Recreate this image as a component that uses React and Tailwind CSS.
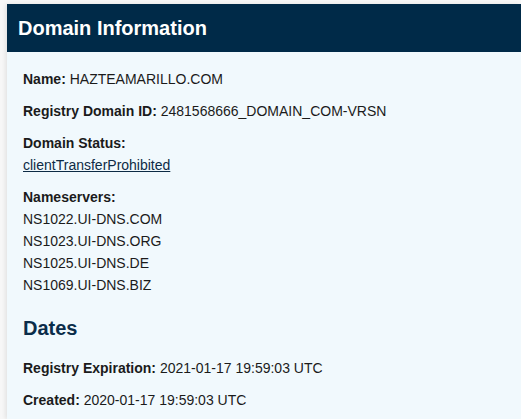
export default function App() {
  return (
    <div className="min-h-[419px] bg-[#f7f7f7] pt-[4px] pl-[7px] overflow-hidden" style={{ fontFamily: '"Liberation Sans", Arial, sans-serif' }}>
      <div className="bg-[#f1f9fd] shadow-[-2px_0_4px_rgba(0,0,0,0.08)] min-h-[415px]">
        <div className="bg-[#002a48] h-[48px] flex items-center pl-[11px]">
          <h1 className="text-white font-bold text-[20px] leading-none">Domain Information</h1>
        </div>
        <div className="pl-[16px] pt-[16px] text-[14px] leading-[22px] text-[#1b1b1b]">
          <p className="mb-[10px]"><b>Name:</b> HAZTEAMARILLO.COM</p>
          <p className="mb-[10px]"><b>Registry Domain ID:</b> 2481568666_DOMAIN_COM-VRSN</p>
          <div className="mb-[10px]">
            <p><b>Domain Status:</b></p>
            <p><a className="underline text-[#0d2b45]" href="#">clientTransferProhibited</a></p>
          </div>
          <div>
            <p><b>Nameservers:</b></p>
            <p>NS1022.UI-DNS.COM</p>
            <p>NS1023.UI-DNS.ORG</p>
            <p>NS1025.UI-DNS.DE</p>
            <p>NS1069.UI-DNS.BIZ</p>
          </div>
          <h2 className="text-[20px] font-bold text-[#0b2d4a] mt-[20px] mb-[17px] leading-[24px]">Dates</h2>
          <p className="mb-[10px]"><b>Registry Expiration:</b> 2021-01-17 19:59:03 UTC</p>
          <p><b>Created:</b> 2020-01-17 19:59:03 UTC</p>
        </div>
      </div>
    </div>
  );
}
